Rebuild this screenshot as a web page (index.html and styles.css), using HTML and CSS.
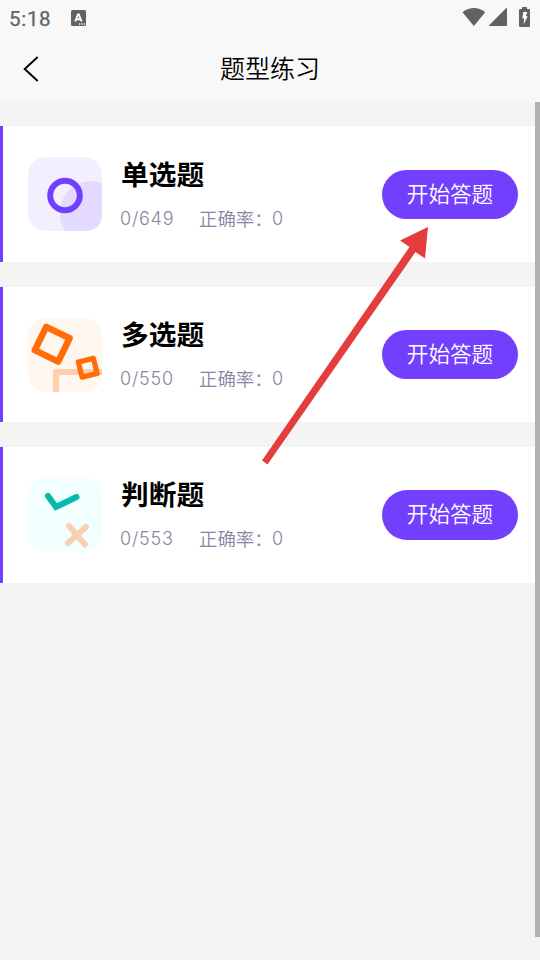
FILE: index.html
```
<!DOCTYPE html>
<html lang="zh-CN">
<head>
<meta charset="utf-8">
<title>题型练习</title>
<link rel="stylesheet" href="styles.css">
</head>
<body>
<div class="screen">
  <div class="status">
    <span class="time">5:18</span>
    <svg class="ime" width="15" height="16" viewBox="0 0 15 16"><rect width="15" height="16" rx="1.500" fill="#626262"/><path d="M4.200 11.500L7 4.500h.8l2.800 7M5.200 9.200h4.500" fill="none" stroke="#fff" stroke-width="1.900"/><path d="M8 14h1.200M10.400 14h1.200M12.700 14h1.200" stroke="#fff" stroke-width="1.300"/></svg>
    <svg class="signals" width="68" height="22" viewBox="0 0 68 22" fill="#626262"><path d="M.5 5.200Q12 -3.200 23.200 5.200L11.900 19z"/><path d="M45 1.800V18.200q0 .8-.8.800H27.800q-1.200 0-.4-.9L43.800 1.500q1.200-1 1.200.3z"/><path d="M60 2V.8q0-.8.8-.8h3.400q.8 0 .8.800V2h1.800q1.200 0 1.200 1.200v15.600q0 1.200-1.200 1.200h-8.600q-1.200 0-1.200-1.200V3.200Q57 2 58.200 2z"/><path d="M61.300 5h3.900l-1.400 4.200h2L61.600 17.500l.7-6h-2z" fill="#fff"/></svg>
  </div>
  <header class="nav">
    <svg class="back" width="16" height="26" viewBox="0 0 16 26"><path d="M14.700 1L1.700 13l13 12" fill="none" stroke="#000" stroke-width="1.900"/></svg>
    <h1>题型练习</h1>
  </header>
  <main class="list">
    <section class="card">
      <svg class="icon" width="74" height="74" viewBox="0 0 74 74"><rect width="74" height="74" rx="18" fill="#f3efff"/><path d="M74 25.500Q69 24 64 24C44 24 32 39 32 57q0 9 5 17h19q18 0 18-18z" fill="#e4daff"/><circle cx="37" cy="38.500" r="14.800" fill="none" stroke="#733fff" stroke-width="6"/></svg>
      <div class="info"><h2>单选题</h2><p><span class="count">0/649</span><span class="rate">正确率：</span><span>0</span></p></div>
      <button>开始答题</button>
    </section>
    <section class="card short">
      <svg class="icon" width="74" height="74" viewBox="0 0 74 74"><rect width="74" height="74" rx="18" fill="#fff6f0"/><path d="M28 74V54h46" fill="none" stroke="#ffcdad" stroke-width="6" stroke-linejoin="round"/><g fill="none" stroke="#ff6c08" stroke-linejoin="round"><rect x="11.200" y="13.200" width="26" height="26" transform="rotate(26 24.200 26.200)" stroke-width="6.500"/><rect x="52" y="42" width="15.500" height="15.500" transform="rotate(-14 59.750 49.750)" stroke-width="5.200"/></g></svg>
      <div class="info"><h2>多选题</h2><p><span class="count">0/550</span><span class="rate">正确率：</span><span>0</span></p></div>
      <button>开始答题</button>
    </section>
    <section class="card last">
      <svg class="icon" width="74" height="74" viewBox="0 0 74 74"><rect width="74" height="74" rx="18" fill="#f1fffe"/><g fill="none" stroke-width="6" stroke-linecap="round"><path d="M20 18l8 11L48.500 19" stroke="#05b9ac"/><path d="M41 48L57 66.500M58 49L40 65" stroke="#f8d1b4"/></g></svg>
      <div class="info"><h2>判断题</h2><p><span class="count">0/553</span><span class="rate">正确率：</span><span>0</span></p></div>
      <button>开始答题</button>
    </section>
  </main>
  <div class="scrollbar"></div>
  <svg class="arrow" width="168" height="240" viewBox="0 0 168 240"><path d="M166 2L138 15.500l9.500 6.500L0 235.500l5.500 4L153.500 27l9.500 6.500z" fill="#e43d3d"/></svg>
</div>
</body>
</html>
```
FILE: styles.css
```
* { box-sizing: border-box; }
body { margin: 0; }
.screen {
  position: relative;
  width: 540px;
  height: 960px;
  overflow: hidden;
  background: #f4f4f4;
  font-family: Inter, "Noto Sans CJK SC", sans-serif;
}
.status {
  display: flex;
  align-items: flex-start;
  height: 38px;
  padding: 7px 10px 0 9px;
  background: #f8f8f8;
}
.time {
  width: 62px;
  font: 400 20.500px/24px Roboto, sans-serif;
  letter-spacing: .7px;
  color: #626262;
  -webkit-text-stroke: .25px #626262;
}
.ime { margin-top: 3px; }
.signals { margin-left: auto; }
.nav {
  display: grid;
  grid-template-columns: 40px 1fr 40px;
  align-items: center;
  height: 64px;
  padding: 0 0 2px;
  background: #f8f8f8;
}
.back { margin-left: 23px; }
h1 {
  margin: -4px 0 0;
  font: 350 25px/36px "Noto Sans CJK SC", "Noto Sans CJK SC DemiLight", sans-serif;
  text-align: center;
  color: #000;
}
.list {
  display: flex;
  flex-direction: column;
  gap: 25px;
  padding-top: 24px;
}
.card {
  display: flex;
  align-items: flex-start;
  height: 136px;
  padding: 31px 22px 0 25px;
  border-left: 3px solid #733fff;
  background: #fff;
}
.short { height: 135px; }
.icon { flex: none; }
.info { margin: -4px 0 0 19px; }
.short .info, .last .info { margin-top: -5px; }
h2 {
  margin: 0;
  font: 700 27.700px/40px "Noto Sans CJK SC", sans-serif;
  color: #000;
}
p {
  display: flex;
  margin: 12px 0 0;
  font-size: 18px;
  font-weight: 300;
  line-height: 28px;
  white-space: nowrap;
  color: #8784a3;
}
.count { width: 78px; margin-left: -1px; margin-right: 1px; letter-spacing: .8px; }
.rate { width: 73px; margin-top: -1px; font: 350 18.400px/28px "Noto Sans CJK SC", sans-serif; }
button {
  width: 136px;
  height: 49px;
  margin: 13px 0 0 auto;
  padding: 0 0 4px;
  border: 0;
  border-radius: 25px;
  background: #733fff;
  color: #fff;
  font: 350 21.600px/32px "Noto Sans CJK SC", sans-serif;
}
.short button, .last button { margin-top: 12px; }
.last button { height: 50px; }
.scrollbar {
  position: absolute;
  top: 102px;
  right: 0;
  width: 5px;
  height: 835px;
  background: #b1b1b1;
}
.arrow { position: absolute; left: 262px; top: 225px; }
```
